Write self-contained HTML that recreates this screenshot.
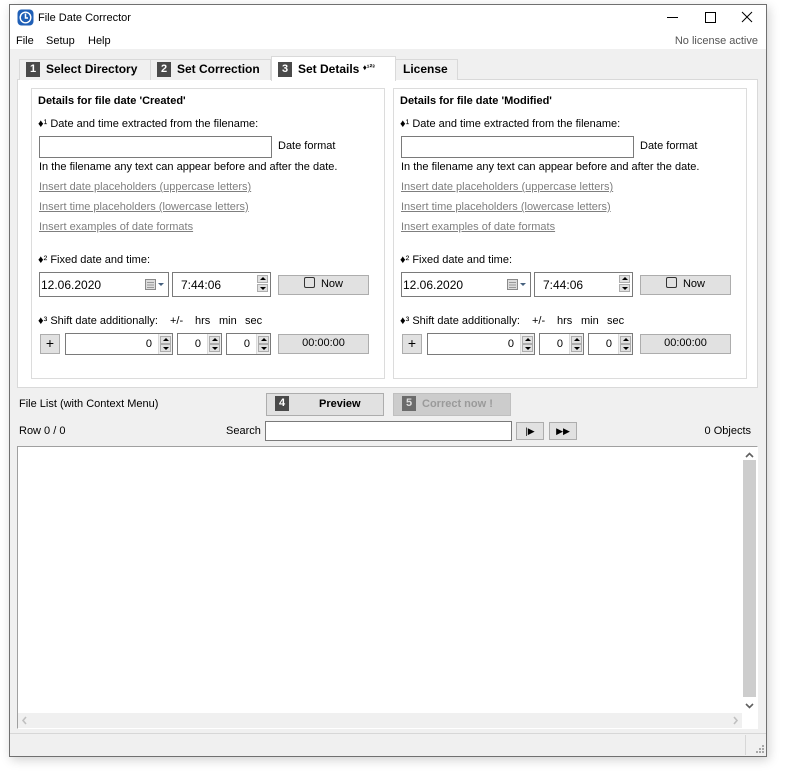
<!DOCTYPE html>
<html><head><meta charset="utf-8"><style>
*{box-sizing:border-box;margin:0;padding:0}
body{width:799px;height:777px;background:#fff;position:relative;overflow:hidden;font-family:"Liberation Sans",Tahoma,sans-serif;font-size:11px;color:#000}
.a{position:absolute;white-space:nowrap}
.t{position:absolute;white-space:nowrap;line-height:14px}
.win{position:absolute;left:9px;top:4px;width:758px;height:753px;border:1px solid #707070;background:#f0f0f0;box-shadow:2px 3px 10px rgba(0,0,0,.18)}
.inp{position:absolute;background:#fff;border:1px solid #7a7a7a}
.btn{position:absolute;background:#e1e1e1;border:1px solid #adadad;text-align:center;line-height:17px}
.lnk{color:#7f7f7f;text-decoration:underline}
.spin{position:absolute;right:0;top:0;bottom:0;width:14px;background:#f0f0f0;border-left:1px solid #dadada}
.spin i{position:absolute;left:1px;width:11px;height:8px;background:#e1e1e1;border:1px solid #adadad}
.spin i:before{content:"";position:absolute;left:2px;border-left:3px solid transparent;border-right:3px solid transparent}
.up:before{top:1px;border-bottom:3px solid #000}
.dn:before{top:2px;border-top:3px solid #000}
.num{display:inline-block;background:#4a4a4a;color:#fff;font-size:11px;width:14px;height:15px;line-height:15px;text-align:center;margin-right:6px;font-weight:bold;vertical-align:1px}
.tab{position:absolute;top:59px;height:21px;background:#f0f0f0;border:1px solid #d9d9d9;border-bottom:none;font-weight:bold;font-size:12px;line-height:19px;padding-left:6px}
.grp{position:absolute;top:88px;width:354px;height:291px;border:1px solid #dcdcdc;background:#fff}
</style></head><body>
<div class="win"></div>
<div class="a" style="left:10px;top:5px;width:756px;height:44px;background:#fff"></div>
<svg class="a" style="left:17px;top:9px" width="17" height="17" viewBox="0 0 17 17"><rect x="0.5" y="0.5" width="16" height="16" rx="4" fill="#1f5fb6"/><circle cx="8.5" cy="8.5" r="6" fill="#fff"/><circle cx="8.5" cy="8.5" r="4.6" fill="#1f5fb6"/><path d="M8.5 4.5V9H11" stroke="#fff" stroke-width="1.5" fill="none"/></svg>
<div class="t" style="left:38px;top:11px">File Date Corrector</div>
<svg class="a" style="left:660px;top:10px" width="100" height="14"><path d="M7 7.5H18" stroke="#000"/><rect x="45.5" y="2.5" width="10" height="10" fill="none" stroke="#000"/><path d="M82 2L92 12M92 2L82 12" stroke="#000"/></svg>
<div class="t" style="left:16px;top:34px">File</div>
<div class="t" style="left:46px;top:34px">Setup</div>
<div class="t" style="left:88px;top:34px">Help</div>
<div class="t" style="right:41px;top:34px;color:#555">No license active</div>

<div class="a" style="left:17px;top:79px;width:741px;height:309px;background:#fff;border:1px solid #d9d9d9"></div>
<div class="tab" style="left:19px;width:132px"><span class="num">1</span>Select Directory</div>
<div class="tab" style="left:150px;width:121px"><span class="num">2</span>Set Correction</div>
<div class="tab" style="left:271px;top:56px;height:25px;width:125px;background:#fff;line-height:21px"><span class="num">3</span>Set Details <span style="font-size:8px;vertical-align:3px">♦¹²³</span></div>
<div class="tab" style="left:395px;width:63px;padding-left:7px">License</div>

<div class="a" style="left:0;top:0">
<div class="grp" style="left:31px"></div>
<div class="t" style="left:38px;top:94px;font-weight:bold">Details for file date 'Created'</div>
<div class="t" style="left:38px;top:117px">♦¹ Date and time extracted from the filename:</div>
<div class="inp" style="left:39px;top:136px;width:233px;height:22px"></div>
<div class="t" style="left:278px;top:139px">Date format</div>
<div class="t" style="left:39px;top:160px">In the filename any text can appear before and after the date.</div>
<div class="t lnk" style="left:39px;top:180px">Insert date placeholders (uppercase letters)</div>
<div class="t lnk" style="left:39px;top:200px">Insert time placeholders (lowercase letters)</div>
<div class="t lnk" style="left:39px;top:220px">Insert examples of date formats</div>
<div class="t" style="left:38px;top:253px">♦² Fixed date and time:</div>
<div class="inp" style="left:39px;top:272px;width:130px;height:25px"><span class="t" style="left:1px;top:5px;font-size:12px">12.06.2020</span>
<svg class="a" style="left:105px;top:6px" width="22" height="12"><rect x="0.5" y="0.5" width="10" height="10" fill="#ddd" stroke="#8a8a8a"/><path d="M2 3.5H9M2 6H9M2 8.5H9" stroke="#999"/><path d="M13 4H19L16 7Z" fill="#47617f"/></svg></div>
<div class="inp" style="left:172px;top:272px;width:99px;height:25px"><span class="t" style="left:8px;top:5px;font-size:12px">7:44:06</span><div class="spin" style="width:14px;border:none;background:#fff"><i class="up" style="top:2px"></i><i class="dn" style="top:11px"></i></div></div>
<div class="btn" style="left:278px;top:275px;width:91px;height:20px"><span style="display:inline-block;width:11px;height:11px;border:1px solid #333;border-radius:2px;vertical-align:-1px;margin-right:6px"></span>Now</div>
<div class="t" style="left:38px;top:314px">♦³ Shift date additionally:</div>
<div class="t" style="left:170px;top:314px">+/-</div><div class="t" style="left:195px;top:314px">hrs</div><div class="t" style="left:219px;top:314px">min</div><div class="t" style="left:245px;top:314px">sec</div>
<div class="btn" style="left:40px;top:334px;width:20px;height:20px;font-size:14px">+</div>
<div class="inp" style="left:65px;top:333px;width:108px;height:22px"><span class="t" style="right:20px;top:3px">0</span><div class="spin"><i class="up" style="top:2px"></i><i class="dn" style="top:10px"></i></div></div>
<div class="inp" style="left:177px;top:333px;width:45px;height:22px"><span class="t" style="right:20px;top:3px">0</span><div class="spin"><i class="up" style="top:2px"></i><i class="dn" style="top:10px"></i></div></div>
<div class="inp" style="left:226px;top:333px;width:45px;height:22px"><span class="t" style="right:20px;top:3px">0</span><div class="spin"><i class="up" style="top:2px"></i><i class="dn" style="top:10px"></i></div></div>
<div class="btn" style="left:278px;top:334px;width:91px;height:20px">00:00:00</div>
</div>

<div class="a" style="left:362px;top:0">
<div class="grp" style="left:31px"></div>
<div class="t" style="left:38px;top:94px;font-weight:bold">Details for file date 'Modified'</div>
<div class="t" style="left:38px;top:117px">♦¹ Date and time extracted from the filename:</div>
<div class="inp" style="left:39px;top:136px;width:233px;height:22px"></div>
<div class="t" style="left:278px;top:139px">Date format</div>
<div class="t" style="left:39px;top:160px">In the filename any text can appear before and after the date.</div>
<div class="t lnk" style="left:39px;top:180px">Insert date placeholders (uppercase letters)</div>
<div class="t lnk" style="left:39px;top:200px">Insert time placeholders (lowercase letters)</div>
<div class="t lnk" style="left:39px;top:220px">Insert examples of date formats</div>
<div class="t" style="left:38px;top:253px">♦² Fixed date and time:</div>
<div class="inp" style="left:39px;top:272px;width:130px;height:25px"><span class="t" style="left:1px;top:5px;font-size:12px">12.06.2020</span>
<svg class="a" style="left:105px;top:6px" width="22" height="12"><rect x="0.5" y="0.5" width="10" height="10" fill="#ddd" stroke="#8a8a8a"/><path d="M2 3.5H9M2 6H9M2 8.5H9" stroke="#999"/><path d="M13 4H19L16 7Z" fill="#47617f"/></svg></div>
<div class="inp" style="left:172px;top:272px;width:99px;height:25px"><span class="t" style="left:8px;top:5px;font-size:12px">7:44:06</span><div class="spin" style="width:14px;border:none;background:#fff"><i class="up" style="top:2px"></i><i class="dn" style="top:11px"></i></div></div>
<div class="btn" style="left:278px;top:275px;width:91px;height:20px"><span style="display:inline-block;width:11px;height:11px;border:1px solid #333;border-radius:2px;vertical-align:-1px;margin-right:6px"></span>Now</div>
<div class="t" style="left:38px;top:314px">♦³ Shift date additionally:</div>
<div class="t" style="left:170px;top:314px">+/-</div><div class="t" style="left:195px;top:314px">hrs</div><div class="t" style="left:219px;top:314px">min</div><div class="t" style="left:245px;top:314px">sec</div>
<div class="btn" style="left:40px;top:334px;width:20px;height:20px;font-size:14px">+</div>
<div class="inp" style="left:65px;top:333px;width:108px;height:22px"><span class="t" style="right:20px;top:3px">0</span><div class="spin"><i class="up" style="top:2px"></i><i class="dn" style="top:10px"></i></div></div>
<div class="inp" style="left:177px;top:333px;width:45px;height:22px"><span class="t" style="right:20px;top:3px">0</span><div class="spin"><i class="up" style="top:2px"></i><i class="dn" style="top:10px"></i></div></div>
<div class="inp" style="left:226px;top:333px;width:45px;height:22px"><span class="t" style="right:20px;top:3px">0</span><div class="spin"><i class="up" style="top:2px"></i><i class="dn" style="top:10px"></i></div></div>
<div class="btn" style="left:278px;top:334px;width:91px;height:20px">00:00:00</div>
</div>

<div class="t" style="left:19px;top:397px">File List (with Context Menu)</div>
<div class="btn" style="left:266px;top:393px;width:118px;height:23px;font-weight:bold;line-height:21px;text-align:left;padding-left:8px"><span class="num">4</span><span style="margin-left:24px">Preview</span></div>
<div class="btn" style="left:393px;top:393px;width:118px;height:23px;font-weight:bold;line-height:21px;text-align:left;padding-left:8px;background:#cccccc;border-color:#bfbfbf;color:#9a9a9a"><span class="num" style="background:#6b6b6b;color:#ddd">5</span>Correct now !</div>
<div class="t" style="left:19px;top:424px">Row 0 / 0</div>
<div class="t" style="left:226px;top:424px">Search</div>
<div class="inp" style="left:265px;top:421px;width:247px;height:20px"></div>
<div class="btn" style="left:516px;top:422px;width:28px;height:18px;font-size:9px;line-height:16px">|▶</div>
<div class="btn" style="left:549px;top:422px;width:28px;height:18px;font-size:9px;line-height:16px">▶▶</div>
<div class="t" style="right:48px;top:424px">0 Objects</div>

<div class="a" style="left:17px;top:446px;width:741px;height:283px;background:#fff;border-top:1px solid #a0a0a0;border-left:1px solid #a0a0a0;border-right:1px solid #fff;border-bottom:1px solid #fff"></div>
<div class="a" style="left:741px;top:447px;width:16px;height:266px;background:#fff"></div>
<div class="a" style="left:743px;top:460px;width:13px;height:237px;background:#cdcdcd"></div>
<svg class="a" style="left:743px;top:449px" width="13" height="264"><path d="M3 8L6.5 4.5L10 8" stroke="#606060" stroke-width="1.6" fill="none"/><path d="M3 255L6.5 258.5L10 255" stroke="#606060" stroke-width="1.6" fill="none"/></svg>
<div class="a" style="left:18px;top:713px;width:724px;height:15px;background:#f0f0f0"></div>
<svg class="a" style="left:20px;top:713px" width="722" height="15"><path d="M6 4L3 7.5L6 11" stroke="#c0c0c0" stroke-width="1.6" fill="none"/><path d="M714 4L717 7.5L714 11" stroke="#c0c0c0" stroke-width="1.6" fill="none"/></svg>
<div class="a" style="left:10px;top:733px;width:756px;height:1px;background:#d7d7d7"></div>
<div class="a" style="left:745px;top:735px;width:1px;height:20px;background:#d7d7d7"></div>
<svg class="a" style="left:755px;top:744px" width="10" height="10"><g fill="#a8a8a8"><rect x="7" y="1" width="2" height="2"/><rect x="4" y="4" width="2" height="2"/><rect x="7" y="4" width="2" height="2"/><rect x="1" y="7" width="2" height="2"/><rect x="4" y="7" width="2" height="2"/><rect x="7" y="7" width="2" height="2"/></g></svg>
</body></html>
